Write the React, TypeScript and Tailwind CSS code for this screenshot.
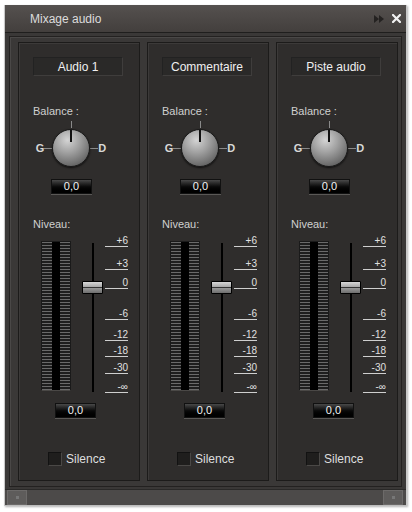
import React from 'react';

const CHANNELS = ['Audio 1', 'Commentaire', 'Piste audio'];

// tick marks: label + y offset (px) of the underline inside the meter block
const TICKS: { label: string; y: number }[] = [
  { label: '+6', y: 5 },
  { label: '+3', y: 28 },
  { label: '0', y: 47 },
  { label: '-6', y: 78 },
  { label: '-12', y: 99 },
  { label: '-18', y: 115 },
  { label: '-30', y: 132 },
  { label: '-∞', y: 151 },
];

const ValueBox: React.FC<{ className?: string }> = ({ className = '' }) => (
  <div className={`flex flex-col ${className}`}>
    <div className="h-[15px] w-[41px] border border-[#111] bg-gradient-to-b from-[#4a4a4a] via-[#0c0c0c] to-black flex items-center justify-center text-[11px] leading-none text-[#f2f2f2]">
      0,0
    </div>
    <div className="h-px w-[41px] bg-[#5a5856]" />
  </div>
);

const Knob: React.FC = () => (
  <div className="flex flex-col items-center w-[72px] ml-[16px]">
    <div className="w-px h-[7px] bg-[#8a8a8a] mb-[1px]" />
    <div className="flex items-center">
      <span className="text-[11px] font-bold text-[#d8d8d8] leading-none">G</span>
      <div className="w-[8px] h-px bg-[#8a8a8a]" />
      <div className="relative w-[38px] h-[38px] rounded-full border border-[#1a1a1a] bg-[radial-gradient(circle_at_40%_28%,#d4d4d4_0%,#a0a0a0_38%,#666_78%,#4a4a4a_100%)] shadow-[0_1px_2px_rgba(0,0,0,0.7)]">
        <div className="absolute left-1/2 top-0 -ml-px w-[2px] h-[12px] bg-[#111]" />
      </div>
      <div className="w-[8px] h-px bg-[#8a8a8a]" />
      <span className="text-[11px] font-bold text-[#d8d8d8] leading-none">D</span>
    </div>
  </div>
);

const Meter: React.FC = () => (
  <div className="flex h-[152px] ml-[22px]">
    {/* vu meter */}
    <div className="flex w-[30px] h-[150px] border border-[#1a1a1a] border-b-[#4a4846]">
      <div className="w-[10px] h-full bg-[repeating-linear-gradient(to_bottom,#6a6a6a_0px,#6a6a6a_1px,#1e1e1e_1px,#1e1e1e_3px)]" />
      <div className="w-[8px] h-full bg-black" />
      <div className="w-[10px] h-full bg-[repeating-linear-gradient(to_bottom,#6a6a6a_0px,#6a6a6a_1px,#1e1e1e_1px,#1e1e1e_3px)]" />
    </div>
    {/* fader */}
    <div className="relative w-[22px] h-full ml-[11px]">
      <div className="absolute left-[10px] top-[2px] w-[2px] h-[149px] bg-black" />
      <div className="absolute left-0 top-[40px] w-[21px] h-[13px] border border-black rounded-[1px] flex flex-col overflow-hidden">
        <div className="h-[5px] bg-gradient-to-b from-[#d8d8d8] to-[#a8a8a8]" />
        <div className="h-px bg-[#333]" />
        <div className="flex-1 bg-gradient-to-b from-[#9a9a9a] to-[#6e6e6e]" />
      </div>
    </div>
    {/* scale */}
    <div className="relative w-[24px] h-full ml-[1px]">
      {TICKS.map((t) => (
        <div
          key={t.label}
          className="absolute left-0 w-[23px] border-b border-[#cfcfcf] text-right text-[10px] leading-[11px] text-[#e0e0e0]"
          style={{ top: t.y - 11 }}
        >
          {t.label}
        </div>
      ))}
    </div>
  </div>
);

const Strip: React.FC<{ name: string }> = ({ name }) => (
  <div className="w-[122px] h-[439px] border border-[#1c1b1a] bg-[#2f2d2c] shadow-[inset_1px_1px_0_#3c3a39] flex flex-col shrink-0">
    <div className="mt-[14px] ml-[14px] w-[90px] h-[19px] bg-[#2a2928] border border-[#3f3d3c] border-t-[#222] border-l-[#222] flex items-center justify-center text-[12px] text-[#f0f0f0] leading-none">
      {name}
    </div>
    <div className="mt-[30px] ml-[14px] text-[11px] leading-none text-[#d0d0d0]">Balance :</div>
    <div className="mt-[4px]">
      <Knob />
    </div>
    <ValueBox className="mt-[12px] ml-[32px]" />
    <div className="mt-[24px] ml-[14px] text-[11px] leading-none text-[#d0d0d0]">Niveau:</div>
    <div className="mt-[11px]">
      <Meter />
    </div>
    <ValueBox className="mt-[10px] ml-[36px]" />
    <div className="mt-[33px] ml-[29px] flex items-center gap-[4px]">
      <div className="w-[14px] h-[14px] bg-[#1f1e1d] border border-[#121212] border-b-[#4a4846] border-r-[#4a4846]" />
      <span className="text-[12px] leading-none text-[#dedede]">Silence</span>
    </div>
  </div>
);

export default function App() {
  return (
    <div className="w-[412px] h-[512px] bg-white pt-[5px] pl-[4px] font-['Liberation_Sans',Arial,sans-serif]">
      <div className="w-[403px] h-[501px] flex flex-col bg-[#3a3837] border-l border-r border-[#c8c8c8] shadow-[1px_1px_2px_rgba(0,0,0,0.3)]">
        {/* title bar */}
        <div className="h-[27px] shrink-0 flex items-center pl-[25px] pr-[5px] bg-gradient-to-b from-[#55514f] to-[#433f3d]">
          <span className="text-[12px] text-[#dcdcdc] leading-none">Mixage audio</span>
          <div className="ml-auto flex items-center gap-[7px]">
            <svg width="11" height="8" viewBox="0 0 11 8">
              <path d="M0 0 L5 4 L0 8 Z M5 0 L10 4 L5 8 Z" fill="#242221" />
            </svg>
            <svg width="9" height="9" viewBox="0 0 9 9">
              <path d="M1 1 L8 8 M8 1 L1 8" stroke="#f2f2f2" strokeWidth="2.2" strokeLinecap="square" />
            </svg>
          </div>
        </div>
        <div className="h-px bg-[#1f1e1d] shrink-0" />
        {/* body */}
        <div className="flex-1 pt-[3px] pl-[4px] pr-[4px] pb-[2px] bg-[#3a3837]">
          <div className="h-full border border-[#232120] shadow-[inset_1px_1px_0_#4a4847] pt-[5px] pl-[8px]">
            <div className="flex gap-[7px]">
              {CHANNELS.map((c) => (
                <Strip key={c} name={c} />
              ))}
            </div>
          </div>
        </div>
        {/* horizontal scrollbar */}
        <div className="h-[17px] shrink-0 flex items-stretch bg-[#4c4a49] border-t border-[#2a2928] border-b border-b-[#bdbdbd]">
          <div className="w-[20px] ml-[2px] bg-[#5e5c5b] border border-[#6c6a69] flex items-center justify-center">
            <div className="w-[3px] h-[3px] bg-[#777]" />
          </div>
          <div className="flex-1" />
          <div className="w-[20px] mr-[3px] bg-[#5e5c5b] border border-[#6c6a69] flex items-center justify-center">
            <div className="w-[3px] h-[3px] bg-[#777]" />
          </div>
        </div>
      </div>
    </div>
  );
}
